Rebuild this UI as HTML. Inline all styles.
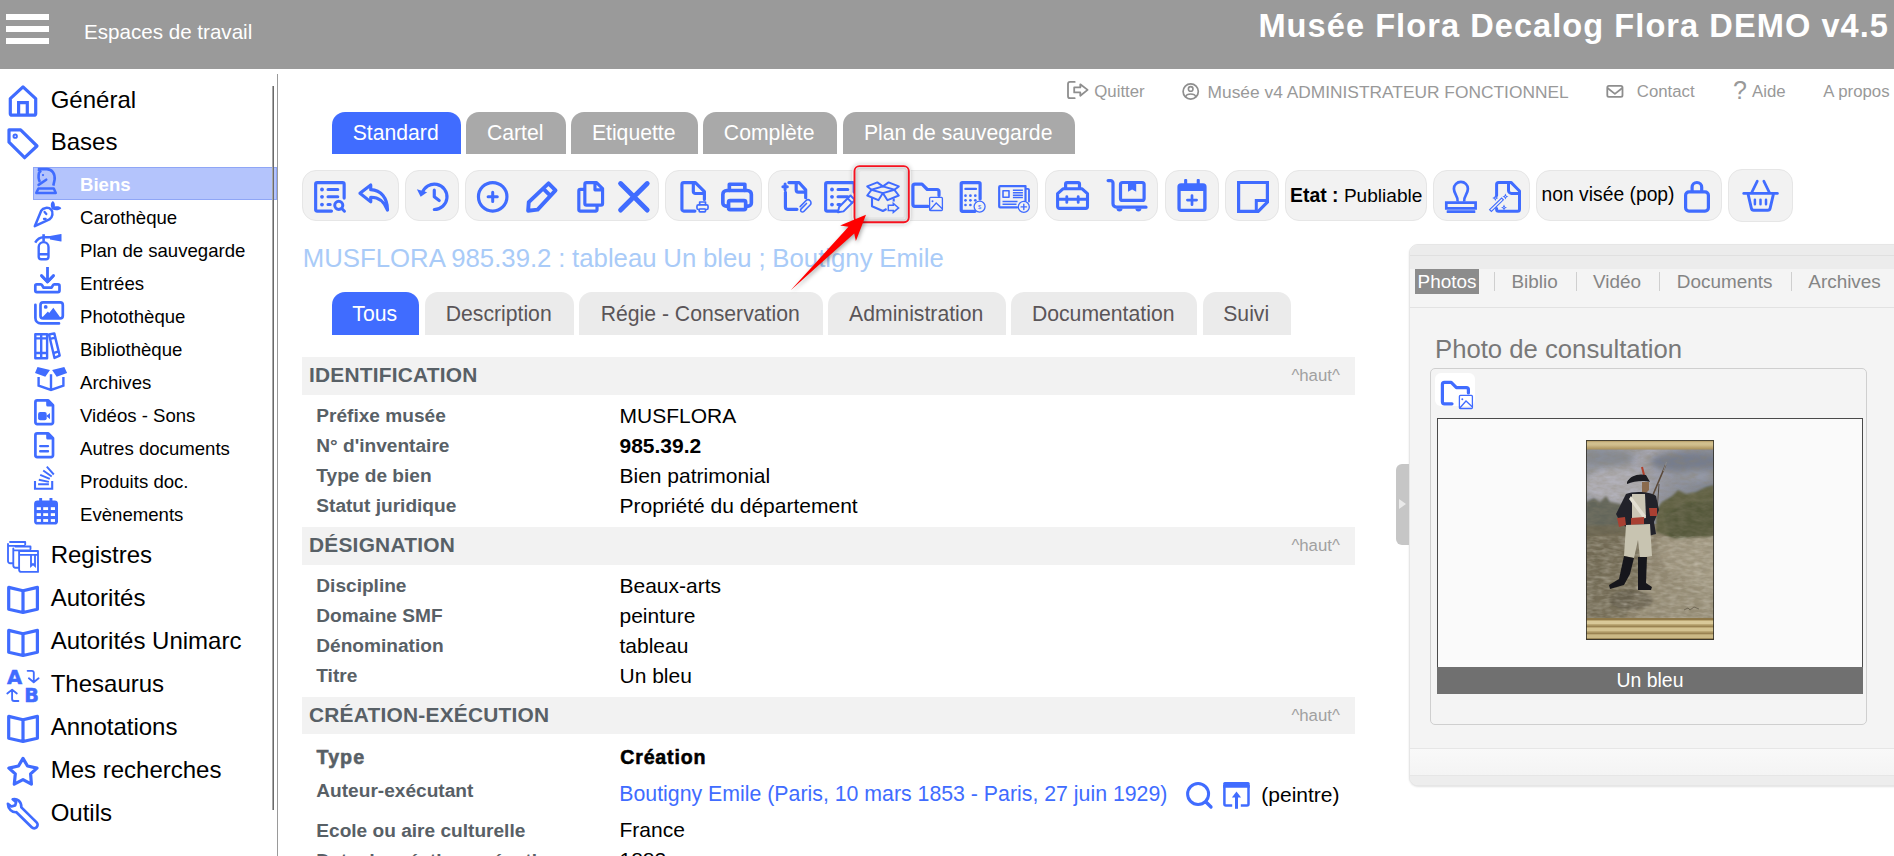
<!DOCTYPE html>
<html lang="fr"><head><meta charset="utf-8"><title>Musée Flora</title><style>
html,body{margin:0;padding:0;background:#fff;}
body{width:1894px;height:856px;overflow:hidden;position:relative;font-family:"Liberation Sans",sans-serif;}
.t{position:absolute;line-height:1;white-space:nowrap;}
.b{position:absolute;}
.i{position:absolute;overflow:visible;}
.tab{position:absolute;box-sizing:border-box;padding-right:1.6px;text-align:center;white-space:nowrap;font-family:"Liberation Sans",sans-serif;}
</style></head><body>
<div class="b" style="left:0px;top:0px;width:1894px;height:68.7px;background:#9a9a9a"></div>
<div class="b" style="left:6px;top:14.3px;width:43px;height:5.7px;background:#fff"></div>
<div class="b" style="left:6px;top:26.2px;width:43px;height:5.7px;background:#fff"></div>
<div class="b" style="left:6px;top:37.9px;width:43px;height:5.7px;background:#fff"></div>
<div class="t" style="left:84px;top:21.56px;font-size:20.6px;color:#fff;font-weight:normal;font-family:'Liberation Sans', sans-serif;">Espaces de travail</div>
<div class="t" style="right:5px;top:10.10px;font-size:32.6px;color:#fff;font-weight:bold;font-family:'Liberation Sans', sans-serif;letter-spacing:1.05px;">Musée Flora Decalog Flora DEMO v4.5</div>
<div class="b" style="left:276.9px;top:74px;width:1.2px;height:782px;background:#9a9a9a"></div>
<div class="t" style="left:50.7px;top:87.58px;font-size:24px;color:#000;font-weight:normal;font-family:'Liberation Sans', sans-serif;">Général</div>
<div class="t" style="left:50.7px;top:130.38px;font-size:24px;color:#000;font-weight:normal;font-family:'Liberation Sans', sans-serif;">Bases</div>
<div class="b" style="left:33px;top:167px;width:244px;height:32.7px;background:#b4c4fc;border:1px solid #8fa6f6;box-sizing:border-box"></div>
<div class="b" style="left:271.6px;top:86px;width:1.1px;height:724px;background:#a9a9a9"></div>
<div class="b" style="left:272.6px;top:86px;width:1.4px;height:724px;background:#6a6a6a"></div>
<div class="t" style="left:80px;top:176.06px;font-size:18.6px;color:#fff;font-weight:bold;font-family:'Liberation Sans', sans-serif;">Biens</div>
<div class="t" style="left:80px;top:209.06px;font-size:18.6px;color:#000;font-weight:normal;font-family:'Liberation Sans', sans-serif;">Carothèque</div>
<div class="t" style="left:80px;top:242.06px;font-size:18.6px;color:#000;font-weight:normal;font-family:'Liberation Sans', sans-serif;">Plan de sauvegarde</div>
<div class="t" style="left:80px;top:275.06px;font-size:18.6px;color:#000;font-weight:normal;font-family:'Liberation Sans', sans-serif;">Entrées</div>
<div class="t" style="left:80px;top:308.06px;font-size:18.6px;color:#000;font-weight:normal;font-family:'Liberation Sans', sans-serif;">Photothèque</div>
<div class="t" style="left:80px;top:341.06px;font-size:18.6px;color:#000;font-weight:normal;font-family:'Liberation Sans', sans-serif;">Bibliothèque</div>
<div class="t" style="left:80px;top:374.06px;font-size:18.6px;color:#000;font-weight:normal;font-family:'Liberation Sans', sans-serif;">Archives</div>
<div class="t" style="left:80px;top:407.06px;font-size:18.6px;color:#000;font-weight:normal;font-family:'Liberation Sans', sans-serif;">Vidéos - Sons</div>
<div class="t" style="left:80px;top:440.06px;font-size:18.6px;color:#000;font-weight:normal;font-family:'Liberation Sans', sans-serif;">Autres documents</div>
<div class="t" style="left:80px;top:473.06px;font-size:18.6px;color:#000;font-weight:normal;font-family:'Liberation Sans', sans-serif;">Produits doc.</div>
<div class="t" style="left:80px;top:506.06px;font-size:18.6px;color:#000;font-weight:normal;font-family:'Liberation Sans', sans-serif;">Evènements</div>
<div class="t" style="left:50.7px;top:543.18px;font-size:24px;color:#000;font-weight:normal;font-family:'Liberation Sans', sans-serif;">Registres</div>
<div class="t" style="left:50.7px;top:586.18px;font-size:24px;color:#000;font-weight:normal;font-family:'Liberation Sans', sans-serif;">Autorités</div>
<div class="t" style="left:50.7px;top:629.18px;font-size:24px;color:#000;font-weight:normal;font-family:'Liberation Sans', sans-serif;">Autorités Unimarc</div>
<div class="t" style="left:50.7px;top:672.18px;font-size:24px;color:#000;font-weight:normal;font-family:'Liberation Sans', sans-serif;">Thesaurus</div>
<div class="t" style="left:50.7px;top:715.18px;font-size:24px;color:#000;font-weight:normal;font-family:'Liberation Sans', sans-serif;">Annotations</div>
<div class="t" style="left:50.7px;top:758.18px;font-size:24px;color:#000;font-weight:normal;font-family:'Liberation Sans', sans-serif;">Mes recherches</div>
<div class="t" style="left:50.7px;top:801.38px;font-size:24px;color:#000;font-weight:normal;font-family:'Liberation Sans', sans-serif;">Outils</div>
<div class="t" style="left:1094.3px;top:84.18px;font-size:16.8px;color:#999;font-weight:normal;font-family:'Liberation Sans', sans-serif;">Quitter</div>
<div class="t" style="left:1207.6px;top:83.71px;font-size:17.35px;color:#999;font-weight:normal;font-family:'Liberation Sans', sans-serif;">Musée v4 ADMINISTRATEUR FONCTIONNEL</div>
<div class="t" style="left:1636.8px;top:84.18px;font-size:16.8px;color:#999;font-weight:normal;font-family:'Liberation Sans', sans-serif;">Contact</div>
<div class="t" style="left:1733px;top:78.44px;font-size:25px;color:#999;font-weight:normal;font-family:'Liberation Sans', sans-serif;">?</div>
<div class="t" style="left:1752px;top:84.18px;font-size:16.8px;color:#999;font-weight:normal;font-family:'Liberation Sans', sans-serif;">Aide</div>
<div class="t" style="left:1823.3px;top:84.18px;font-size:16.8px;color:#999;font-weight:normal;font-family:'Liberation Sans', sans-serif;">A propos</div>
<div class="tab" style="left:332px;top:112px;width:129px;height:41.7px;background:#406cff;color:#fff;font-size:21.2px;line-height:42px;border-radius:13px 13px 0 0">Standard</div>
<div class="tab" style="left:466px;top:112px;width:100px;height:41.7px;background:#a9a9a9;color:#fff;font-size:21.2px;line-height:42px;border-radius:13px 13px 0 0">Cartel</div>
<div class="tab" style="left:571px;top:112px;width:127px;height:41.7px;background:#a9a9a9;color:#fff;font-size:21.2px;line-height:42px;border-radius:13px 13px 0 0">Etiquette</div>
<div class="tab" style="left:703px;top:112px;width:134px;height:41.7px;background:#a9a9a9;color:#fff;font-size:21.2px;line-height:42px;border-radius:13px 13px 0 0">Complète</div>
<div class="tab" style="left:843px;top:112px;width:232px;height:41.7px;background:#a9a9a9;color:#fff;font-size:21.2px;line-height:42px;border-radius:13px 13px 0 0">Plan de sauvegarde</div>
<div class="b" style="left:302px;top:170px;width:97px;height:51px;background:#f2f2f2;border:1px solid #e6e6e6;border-radius:14px;box-sizing:border-box"></div>
<div class="b" style="left:405px;top:170px;width:54px;height:51px;background:#f2f2f2;border:1px solid #e6e6e6;border-radius:14px;box-sizing:border-box"></div>
<div class="b" style="left:465.4px;top:170px;width:193.20000000000005px;height:51px;background:#f2f2f2;border:1px solid #e6e6e6;border-radius:14px;box-sizing:border-box"></div>
<div class="b" style="left:665px;top:170px;width:96.5px;height:51px;background:#f2f2f2;border:1px solid #e6e6e6;border-radius:14px;box-sizing:border-box"></div>
<div class="b" style="left:768.3px;top:170px;width:270.20000000000005px;height:51px;background:#f2f2f2;border:1px solid #e6e6e6;border-radius:14px;box-sizing:border-box"></div>
<div class="b" style="left:1045px;top:170px;width:113.40000000000009px;height:51px;background:#f2f2f2;border:1px solid #e6e6e6;border-radius:14px;box-sizing:border-box"></div>
<div class="b" style="left:1165px;top:170px;width:53.59999999999991px;height:51px;background:#f2f2f2;border:1px solid #e6e6e6;border-radius:14px;box-sizing:border-box"></div>
<div class="b" style="left:1225px;top:170px;width:53.799999999999955px;height:51px;background:#f2f2f2;border:1px solid #e6e6e6;border-radius:14px;box-sizing:border-box"></div>
<div class="b" style="left:1285px;top:170px;width:141.5px;height:51px;background:#f2f2f2;border:1px solid #e6e6e6;border-radius:14px;box-sizing:border-box"></div>
<div class="b" style="left:1433px;top:170px;width:96.79999999999995px;height:51px;background:#f2f2f2;border:1px solid #e6e6e6;border-radius:14px;box-sizing:border-box"></div>
<div class="b" style="left:1536px;top:170px;width:185.5999999999999px;height:51px;background:#f2f2f2;border:1px solid #e6e6e6;border-radius:14px;box-sizing:border-box"></div>
<div class="b" style="left:1728px;top:169px;width:65px;height:53px;background:#f2f2f2;border:1px solid #e6e6e6;border-radius:14px;box-sizing:border-box"></div>
<div class="b" style="left:852px;top:164px;width:59px;height:61px;border-radius:8px;box-shadow:0 0 4px rgba(0,0,0,.18);background:#eee"></div>
<div class="t" style="left:1290.1px;top:186.03px;font-size:19.1px;color:#000;font-weight:normal;font-family:'Liberation Sans', sans-serif;"><b style="font-size:19.4px">Etat :</b> Publiable</div>
<div class="t" style="left:1541.6px;top:185.36px;font-size:19.3px;color:#000;font-weight:normal;font-family:'Liberation Sans', sans-serif;">non visée (pop)</div>
<div class="t" style="left:302.8px;top:246.20px;font-size:25.75px;color:#a9cbf8;font-weight:normal;font-family:'Liberation Sans', sans-serif;word-spacing:-0.4px;">MUSFLORA 985.39.2 : tableau Un bleu ; Boutigny Emile</div>
<div class="tab" style="left:332px;top:292px;width:87px;height:42.8px;background:#406cff;color:#fff;font-size:21.2px;line-height:43px;border-radius:13px 13px 0 0">Tous</div>
<div class="tab" style="left:425px;top:292px;width:149px;height:42.8px;background:#ebebeb;color:#5a5558;font-size:21.2px;line-height:43px;border-radius:13px 13px 0 0">Description</div>
<div class="tab" style="left:579px;top:292px;width:244px;height:42.8px;background:#ebebeb;color:#5a5558;font-size:21.2px;line-height:43px;border-radius:13px 13px 0 0">Régie - Conservation</div>
<div class="tab" style="left:828px;top:292px;width:178px;height:42.8px;background:#ebebeb;color:#5a5558;font-size:21.2px;line-height:43px;border-radius:13px 13px 0 0">Administration</div>
<div class="tab" style="left:1011px;top:292px;width:186px;height:42.8px;background:#ebebeb;color:#5a5558;font-size:21.2px;line-height:43px;border-radius:13px 13px 0 0">Documentation</div>
<div class="tab" style="left:1203px;top:292px;width:88px;height:42.8px;background:#ebebeb;color:#5a5558;font-size:21.2px;line-height:43px;border-radius:13px 13px 0 0">Suivi</div>
<div class="b" style="left:302px;top:357px;width:1053px;height:37.9px;background:#f2f2f2"></div>
<div class="t" style="left:309px;top:365.41px;font-size:20.9px;color:#586066;font-weight:bold;font-family:'Liberation Sans', sans-serif;letter-spacing:0.22px;">IDENTIFICATION</div>
<div class="t" style="left:1291.4px;top:368.08px;font-size:16.8px;color:#a0a0a0;font-weight:normal;font-family:'Liberation Sans', sans-serif;">^haut^</div>
<div class="t" style="left:316.3px;top:406.23px;font-size:19.1px;color:#586066;font-weight:bold;font-family:'Liberation Sans', sans-serif;">Préfixe musée</div>
<div class="t" style="left:619.5px;top:405.22px;font-size:21px;color:#000;font-weight:normal;font-family:'Liberation Sans', sans-serif;">MUSFLORA</div>
<div class="t" style="left:316.3px;top:436.03px;font-size:19.1px;color:#586066;font-weight:bold;font-family:'Liberation Sans', sans-serif;">N° d'inventaire</div>
<div class="t" style="left:619.5px;top:435.02px;font-size:21px;color:#000;font-weight:bold;font-family:'Liberation Sans', sans-serif;">985.39.2</div>
<div class="t" style="left:316.3px;top:465.93px;font-size:19.1px;color:#586066;font-weight:bold;font-family:'Liberation Sans', sans-serif;">Type de bien</div>
<div class="t" style="left:619.5px;top:464.92px;font-size:21px;color:#000;font-weight:normal;font-family:'Liberation Sans', sans-serif;">Bien patrimonial</div>
<div class="t" style="left:316.3px;top:495.93px;font-size:19.1px;color:#586066;font-weight:bold;font-family:'Liberation Sans', sans-serif;">Statut juridique</div>
<div class="t" style="left:619.5px;top:494.92px;font-size:21px;color:#000;font-weight:normal;font-family:'Liberation Sans', sans-serif;">Propriété du département</div>
<div class="b" style="left:302px;top:527px;width:1053px;height:37.9px;background:#f2f2f2"></div>
<div class="t" style="left:309px;top:535.41px;font-size:20.9px;color:#586066;font-weight:bold;font-family:'Liberation Sans', sans-serif;letter-spacing:0.22px;">DÉSIGNATION</div>
<div class="t" style="left:1291.4px;top:538.08px;font-size:16.8px;color:#a0a0a0;font-weight:normal;font-family:'Liberation Sans', sans-serif;">^haut^</div>
<div class="t" style="left:316.3px;top:576.23px;font-size:19.1px;color:#586066;font-weight:bold;font-family:'Liberation Sans', sans-serif;">Discipline</div>
<div class="t" style="left:619.5px;top:575.22px;font-size:21px;color:#000;font-weight:normal;font-family:'Liberation Sans', sans-serif;">Beaux-arts</div>
<div class="t" style="left:316.3px;top:606.23px;font-size:19.1px;color:#586066;font-weight:bold;font-family:'Liberation Sans', sans-serif;">Domaine SMF</div>
<div class="t" style="left:619.5px;top:605.22px;font-size:21px;color:#000;font-weight:normal;font-family:'Liberation Sans', sans-serif;">peinture</div>
<div class="t" style="left:316.3px;top:636.23px;font-size:19.1px;color:#586066;font-weight:bold;font-family:'Liberation Sans', sans-serif;">Dénomination</div>
<div class="t" style="left:619.5px;top:635.22px;font-size:21px;color:#000;font-weight:normal;font-family:'Liberation Sans', sans-serif;">tableau</div>
<div class="t" style="left:316.3px;top:666.23px;font-size:19.1px;color:#586066;font-weight:bold;font-family:'Liberation Sans', sans-serif;">Titre</div>
<div class="t" style="left:619.5px;top:665.22px;font-size:21px;color:#000;font-weight:normal;font-family:'Liberation Sans', sans-serif;">Un bleu</div>
<div class="b" style="left:302px;top:697px;width:1053px;height:36.7px;background:#f2f2f2"></div>
<div class="t" style="left:309px;top:705.41px;font-size:20.9px;color:#586066;font-weight:bold;font-family:'Liberation Sans', sans-serif;letter-spacing:0.22px;">CRÉATION-EXÉCUTION</div>
<div class="t" style="left:1291.4px;top:708.08px;font-size:16.8px;color:#a0a0a0;font-weight:normal;font-family:'Liberation Sans', sans-serif;">^haut^</div>
<div class="t" style="left:316.6px;top:748.12px;font-size:19.7px;color:#586066;font-weight:bold;font-family:'Liberation Sans', sans-serif;letter-spacing:1.0px;-webkit-text-stroke:0.55px #586066;">Type</div>
<div class="t" style="left:620.3px;top:748.21px;font-size:19.6px;color:#000;font-weight:bold;font-family:'Liberation Sans', sans-serif;letter-spacing:0.8px;-webkit-text-stroke:0.55px #000;">Création</div>
<div class="t" style="left:316.3px;top:780.93px;font-size:19.1px;color:#586066;font-weight:bold;font-family:'Liberation Sans', sans-serif;">Auteur-exécutant</div>
<div class="t" style="left:619.3px;top:783.97px;font-size:21.3px;color:#406cff;font-weight:normal;font-family:'Liberation Sans', sans-serif;">Boutigny Emile (Paris, 10 mars 1853 - Paris, 27 juin 1929)</div>
<div class="t" style="left:1261.3px;top:783.62px;font-size:21px;color:#000;font-weight:normal;font-family:'Liberation Sans', sans-serif;">(peintre)</div>
<div class="t" style="left:316.3px;top:821.13px;font-size:19.1px;color:#586066;font-weight:bold;font-family:'Liberation Sans', sans-serif;">Ecole ou aire culturelle</div>
<div class="t" style="left:619.5px;top:819.12px;font-size:21px;color:#000;font-weight:normal;font-family:'Liberation Sans', sans-serif;">France</div>
<div class="t" style="left:316.3px;top:851.13px;font-size:19.1px;color:#586066;font-weight:bold;font-family:'Liberation Sans', sans-serif;">Date de création-exécution</div>
<div class="t" style="left:619.5px;top:849.22px;font-size:21px;color:#000;font-weight:normal;font-family:'Liberation Sans', sans-serif;">1882</div>
<div class="b" style="left:1408.8px;top:244px;width:500px;height:542px;background:#f4f4f4;border:1px solid #e6e6e6;border-radius:9px 0 0 9px;box-sizing:border-box;box-shadow:0 1px 2px rgba(0,0,0,.12)"></div>
<div class="b" style="left:1410px;top:245px;width:490px;height:23.5px;background:#ececec;border-radius:8px 0 0 0"></div>
<div class="b" style="left:1410px;top:255px;width:490px;height:1px;background:#e0e0e0"></div>
<div class="b" style="left:1410px;top:307px;width:490px;height:1px;background:#e2e2e2"></div>
<div class="b" style="left:1410px;top:748px;width:490px;height:1px;background:#e6e6e6"></div>
<div class="b" style="left:1410px;top:775px;width:490px;height:1px;background:#e6e6e6"></div>
<div class="b" style="left:1410px;top:776px;width:490px;height:9px;background:#ededed;border-radius:0 0 0 8px"></div>
<div class="b" style="left:1410px;top:749px;width:490px;height:26px;background:linear-gradient(#f9f9f9,#f4f4f4)"></div>
<div class="b" style="left:1396.4px;top:464px;width:12.5px;height:81px;background:#c6c6c6;border-radius:6px 0 0 6px"></div>
<svg class="i" style="left:1397.6px;top:498px" width="10" height="12" viewBox="0 0 10 12"><path d="M1 1 L8 6 L1 11Z" fill="#e9e9e9"/></svg>
<div class="b" style="left:1415px;top:269.3px;width:64px;height:24.4px;background:#8c8c8c"></div>
<div class="t" style="left:1417.6px;top:272.90px;font-size:18.9px;color:#fff;font-weight:normal;font-family:'Liberation Sans', sans-serif;">Photos</div>
<div class="t" style="left:1511.5px;top:272.90px;font-size:18.9px;color:#858585;font-weight:normal;font-family:'Liberation Sans', sans-serif;">Biblio</div>
<div class="t" style="left:1593.1px;top:272.90px;font-size:18.9px;color:#858585;font-weight:normal;font-family:'Liberation Sans', sans-serif;">Vidéo</div>
<div class="t" style="left:1676.8px;top:272.90px;font-size:18.9px;color:#858585;font-weight:normal;font-family:'Liberation Sans', sans-serif;">Documents</div>
<div class="t" style="left:1808.3px;top:272.90px;font-size:18.9px;color:#858585;font-weight:normal;font-family:'Liberation Sans', sans-serif;">Archives</div>
<div class="b" style="left:1494px;top:272px;width:1px;height:19px;background:#cfcfcf"></div>
<div class="b" style="left:1575.7px;top:272px;width:1px;height:19px;background:#cfcfcf"></div>
<div class="b" style="left:1659px;top:272px;width:1px;height:19px;background:#cfcfcf"></div>
<div class="b" style="left:1790.8px;top:272px;width:1px;height:19px;background:#cfcfcf"></div>
<div class="t" style="left:1435px;top:337.04px;font-size:25.7px;color:#787878;font-weight:normal;font-family:'Liberation Sans', sans-serif;">Photo de consultation</div>
<div class="b" style="left:1430px;top:368px;width:437px;height:357px;border:1px solid #cfcfcf;border-radius:5px;box-sizing:border-box;background:#f4f4f4"></div>
<div class="b" style="left:1435px;top:373px;width:40px;height:33px;background:#fff;border-radius:6px"></div>
<div class="b" style="left:1437px;top:418px;width:426px;height:276px;border:1px solid #4a4a4a;box-sizing:border-box;background:#fafafa"></div>
<div class="b" style="left:1437px;top:667px;width:426px;height:27px;background:#707070"></div>
<div class="t" style="left:1437px;width:426px;text-align:center;top:670.78px;font-size:19.4px;color:#fff">Un bleu</div>
<svg class="i" style="left:1586px;top:440px" width="128" height="200" viewBox="0 0 128 200">
<defs>
<filter id="pb" x="-5%" y="-5%" width="110%" height="110%"><feGaussianBlur stdDeviation="1.3"/></filter>
<filter id="pb2" x="-5%" y="-5%" width="110%" height="110%"><feGaussianBlur stdDeviation="0.75"/></filter>
<filter id="pb3" x="-10%" y="-10%" width="120%" height="120%"><feGaussianBlur stdDeviation="3"/></filter>
<linearGradient id="sky" x1="0" y1="0" x2="1" y2="0.4"><stop offset="0" stop-color="#8e939d"/><stop offset="0.45" stop-color="#a7a7b2"/><stop offset="1" stop-color="#7f8696"/></linearGradient>
<linearGradient id="gnd" x1="0" y1="0" x2="1" y2="0.3"><stop offset="0" stop-color="#6f6750"/><stop offset="0.5" stop-color="#8a806a"/><stop offset="1" stop-color="#9f967f"/></linearGradient>
<linearGradient id="gold" x1="0" y1="0" x2="0" y2="1"><stop offset="0" stop-color="#b39a63"/><stop offset="0.5" stop-color="#d2c08f"/><stop offset="1" stop-color="#a88f5a"/></linearGradient>
<filter id="tx" x="0" y="0" width="100%" height="100%"><feTurbulence type="fractalNoise" baseFrequency="0.09 0.22" numOctaves="3" seed="7" result="n"/><feColorMatrix in="n" type="matrix" values="0 0 0 0 0.25  0 0 0 0 0.22  0 0 0 0 0.15  0.9 0.9 0 0 -0.62"/></filter>
<filter id="tx2" x="0" y="0" width="100%" height="100%"><feTurbulence type="fractalNoise" baseFrequency="0.12 0.3" numOctaves="2" seed="3" result="n"/><feColorMatrix in="n" type="matrix" values="0 0 0 0 0.85  0 0 0 0 0.82  0 0 0 0 0.74  0 0.9 0.9 0 -0.72"/></filter>
<clipPath id="pc"><rect x="0" y="0" width="128" height="200"/></clipPath>
</defs>
<g clip-path="url(#pc)">
<rect width="128" height="200" fill="#857c66"/>
<rect x="0" y="8" width="128" height="80" fill="url(#sky)"/>
<g filter="url(#pb3)">
<ellipse cx="30" cy="45" rx="34" ry="16" fill="#b3b2bb"/>
<ellipse cx="100" cy="22" rx="36" ry="10" fill="#767d8e"/>
<ellipse cx="112" cy="36" rx="22" ry="6" fill="#9499a6"/>
<ellipse cx="20" cy="18" rx="28" ry="8" fill="#878c97"/>
</g>
<rect x="0" y="84" width="128" height="96" fill="url(#gnd)"/>
<g filter="url(#pb)">
<path d="M0 62 L8 58 L14 62 L20 56 L24 62 L34 64 L46 70 L46 92 L0 96 Z" fill="#62655a"/>
<path d="M70 70 L76 62 L86 56 L92 50 L100 54 L110 52 L120 47 L128 45 L128 96 L92 100 L70 92 Z" fill="#5e6042"/>
<path d="M78 76 L96 64 L128 60 L128 98 L84 98 Z" fill="#55583a"/>
<path d="M0 86 L50 84 L60 120 L40 178 L0 178 Z" fill="#6e664f" opacity=".75"/>
<path d="M70 100 L128 96 L128 150 L80 130 Z" fill="#a59c86" opacity=".7"/>
<path d="M60 140 L128 150 L128 178 L50 178 Z" fill="#978d76" opacity=".7"/>
<ellipse cx="45" cy="160" rx="22" ry="10" fill="#5f5a49" opacity=".7"/>
</g>
<rect x="0" y="9" width="128" height="170" filter="url(#tx)" opacity=".55"/>
<rect x="0" y="96" width="128" height="83" filter="url(#tx2)" opacity=".45"/>
<g filter="url(#pb2)">
<path d="M79.6 25 L58 76" stroke="#5b4a3a" stroke-width="1.6" fill="none"/>
<path d="M80.5 22 L77.5 31" stroke="#8b8b8b" stroke-width="1" fill="none"/>
<path d="M73 44 L71 72" stroke="#4a4036" stroke-width="0.9" fill="none"/>
<path d="M56 27 L58 35" stroke="#b0402c" stroke-width="2" fill="none"/>
<path d="M41 42 C44 36 52 33 60 35 L64 42 C58 40 48 41 41 44 Z" fill="#1b1b20"/>
<path d="M56 42 H63 V50 L60 53 H56 Z" fill="#8a6a4e"/>
<path d="M40 54 C46 51 64 51 70 56 L73 70 L68 82 L70 94 L62 96 L44 90 L34 82 L30 74 Z" fill="#20222b"/>
<path d="M46 54 L59 54 L60 78 L46 80 Z" fill="#cbc6b5"/>
<path d="M45 56 L60 76 L57 78 L43 59 Z" fill="#e3dfd2"/>
<path d="M31 78 L39 77 L40 85 L33 87 Z M45 78 L58 77 L58 84 L45 85 Z M63 68 L71 68 L71 76 L64 76 Z" fill="#a94030"/>
<path d="M40 85 L64 84 L66 116 L54 118 L52 100 L48 118 L38 116 Z" fill="#c8c4b1"/>
<path d="M38 116 L48 118 L44 134 L38 145 L24 149 L23 145 L33 139 Z" fill="#17171a"/>
<path d="M52 117 L61 117 L60 143 L66 147 L65 150 L52 150 Z" fill="#17171a"/>
</g>
<path d="M98 170 l4 -2 l2 2 l4 -3 l5 2" stroke="#5f5747" stroke-width="0.7" fill="none"/>
<rect x="0" y="0" width="128" height="9.5" fill="url(#gold)"/>
<rect x="0" y="2.5" width="128" height="1" fill="#e0d2a6" opacity=".7"/>
<rect x="0" y="178" width="128" height="22" fill="#bca875"/>
<g>
<rect x="0" y="178" width="128" height="2" fill="#8d7748"/>
<rect x="0" y="181" width="128" height="3" fill="#d9c999"/>
<rect x="0" y="185.5" width="128" height="1.5" fill="#9a8352"/>
<rect x="0" y="188" width="128" height="3" fill="#d4c391"/>
<rect x="0" y="192.5" width="128" height="1.5" fill="#9a8352"/>
<rect x="0" y="195" width="128" height="3" fill="#cbb986"/>
<rect x="0" y="198.5" width="128" height="1.5" fill="#7f6b40"/>
</g>
<rect x="0.5" y="0.5" width="127" height="199" fill="none" stroke="#2c2a26" stroke-width="1" opacity=".8"/>
</g>
</svg>

<svg class="i" style="left:0;top:0" width="1894" height="856" viewBox="0 0 1894 856"><path d="M23 86.9 L10.3 98.6 V113.7 a1.5 1.5 0 0 0 1.5 1.5 H34.2 a1.5 1.5 0 0 0 1.5 -1.5 V98.6 Z" fill="none" stroke="#406cff" stroke-width="3.2" stroke-linejoin="round" stroke-linecap="round" />
<path d="M18.6 115 V102.7 H27.3 V115" fill="none" stroke="#406cff" stroke-width="3.2" stroke-linejoin="miter" stroke-linecap="butt" />
<path d="M9 129.8 H20.6 L37 146 L24.6 157.7 L9 142.2 Z" fill="none" stroke="#406cff" stroke-width="3.2" stroke-linejoin="round" stroke-linecap="round" />
<circle cx="15.2" cy="136.2" r="1.7" fill="none" stroke="#406cff" stroke-width="1.9"/>
<path d="M10 542 H25.2 V544.6 M9.2 545.8 H24.2 M8 544 V561 a2.2 2.2 0 0 0 2.2 2.2 H13" fill="none" stroke="#406cff" stroke-width="1.85" stroke-linejoin="round" stroke-linecap="round" />
<path d="M15.3 546.5 H30.5 V549.1 M14.5 550.3 H29.5 M13.3 548.5 V565.5 a2.2 2.2 0 0 0 2.2 2.2 H18.3" fill="none" stroke="#406cff" stroke-width="1.85" stroke-linejoin="round" stroke-linecap="round" />
<path d="M19.1 551 H38 V571.9 H21.3 a2.2 2.2 0 0 1 -2.2 -2.2 Z M19.1 554.8 H38" fill="none" stroke="#406cff" stroke-width="1.85" stroke-linejoin="round" stroke-linecap="round" />
<path d="M31 555 V565.8 L33 564 L35 565.8 V555" fill="none" stroke="#406cff" stroke-width="1.85" stroke-linejoin="miter" stroke-linecap="round" />
<path d="M8.7 587.4 L23 590.8 L37.4 587.4 V609.3 L23 612.5 L8.7 609.3 Z M23 590.8 V612.5" fill="none" stroke="#406cff" stroke-width="3.2" stroke-linejoin="round" stroke-linecap="round" />
<path d="M8.7 630.4 L23 633.8 L37.4 630.4 V652.3 L23 655.5 L8.7 652.3 Z M23 633.8 V655.5" fill="none" stroke="#406cff" stroke-width="3.2" stroke-linejoin="round" stroke-linecap="round" />
<path d="M8.7 716.4 L23 719.8 L37.4 716.4 V738.3 L23 741.5 L8.7 738.3 Z M23 719.8 V741.5" fill="none" stroke="#406cff" stroke-width="3.2" stroke-linejoin="round" stroke-linecap="round" />
<text x="6.9" y="684.2" font-family="DejaVu Sans, sans-serif" font-weight="bold" font-size="19.6" fill="#406cff" stroke="#406cff" stroke-width="0.5">A</text>
<text x="24.2" y="701.9" font-family="DejaVu Sans, sans-serif" font-weight="bold" font-size="19.2" fill="#406cff" stroke="#406cff" stroke-width="0.5">B</text>
<path d="M27.6 670.8 H31.8 a2 2 0 0 1 2 2 V682 M28.9 678.3 L33.7 682.3 L38.6 678.3" fill="none" stroke="#406cff" stroke-width="1.85" stroke-linejoin="round" stroke-linecap="round" />
<path d="M18.4 701 H14.1 a2 2 0 0 1 -2 -2 V690 M7.3 693.5 L12.1 689.6 L16.8 693.5" fill="none" stroke="#406cff" stroke-width="1.85" stroke-linejoin="round" stroke-linecap="round" />
<path d="M23 758.4 L27.5 766 L37 768.1 L30.6 773.9 L31.4 784.2 L23 779.7 L14.3 784.2 L15.3 773.9 L8.9 768.1 L18.5 766 Z" fill="none" stroke="#406cff" stroke-width="3.2" stroke-linejoin="round" stroke-linecap="round" />
<path d="M12.7 799.3 C17 798.2 21.3 801 21.4 807.4 L36.6 822.4 a3.3 3.3 0 0 1 -4.9 4.9 L16.4 812.2 C12 812.6 8 809 7.9 803.8 L11.4 806.5 L15.2 805.4 L16.1 802.1 Z" fill="none" stroke="#406cff" stroke-width="2.7" stroke-linejoin="round" stroke-linecap="round" />
<path d="M37.8 169.1 H46.8 C52.2 169.1 55.3 173.8 54.6 179.8 L53.3 185.6" fill="none" stroke="#406cff" stroke-width="2.6" stroke-linejoin="round" stroke-linecap="butt" />
<path d="M38.4 169.4 L40.4 171.4 L39 172.8 C38.2 176.3 38.3 179.3 40 182" fill="none" stroke="#406cff" stroke-width="2.6" stroke-linejoin="round" stroke-linecap="butt" />
<path d="M46.2 179.7 L38.6 184.9" fill="none" stroke="#406cff" stroke-width="2.6" stroke-linejoin="round" stroke-linecap="round" />
<circle cx="43" cy="175.1" r="1.15" fill="#406cff"/>
<path d="M38.4 188.5 H53.8 L55.8 192.9 H36.3 Z" fill="none" stroke="#406cff" stroke-width="2.5" stroke-linejoin="round" stroke-linecap="round" />
<path d="M34.8 226.2 L41.3 210.6 C43 207.6 48.4 206.8 51.2 209.6 C53.6 212.2 52.6 217.2 49.4 219.4 Z" fill="none" stroke="#406cff" stroke-width="2.5" stroke-linejoin="round" stroke-linecap="round" />
<path d="M44.6 212 L46.3 214 M44 218.8 L45.6 218.9" fill="none" stroke="#406cff" stroke-width="2.3" stroke-linejoin="round" stroke-linecap="round" />
<path d="M52.3 209.4 C50.2 206.5 50.3 202.5 52.9 201 C55 202.6 55.1 205 54.8 206.6 C57 205.8 60 206.2 61.3 208.2 C59.5 210.4 55.5 210.8 52.3 209.4 Z" fill="#406cff" />
<path d="M38.7 247 a4.9 4.9 0 0 1 9.8 0 V256.7 a2.5 2.5 0 0 1 -2.5 2.5 H41.2 a2.5 2.5 0 0 1 -2.5 -2.5 Z M38.7 254.3 H48.5" fill="none" stroke="#406cff" stroke-width="2.4" stroke-linejoin="round" stroke-linecap="round" />
<path d="M43.6 234.2 V241.5" fill="none" stroke="#406cff" stroke-width="2.6" stroke-linejoin="round" stroke-linecap="butt" />
<path d="M35.2 242.6 C37 239.5 40 237.3 43.6 237.2 H50.5" fill="none" stroke="#406cff" stroke-width="2.5" stroke-linejoin="round" stroke-linecap="butt" />
<path d="M50 235.9 L61 233.9 a.5 .5 0 0 1 .5 .5 V241 a.5 .5 0 0 1 -.5 .5 L50 239.6 Z" fill="#406cff" />
<path d="M47.5 267 V281.5 M41.2 275.6 L47.5 282 L53.8 275.6" fill="none" stroke="#406cff" stroke-width="2.8" stroke-linejoin="round" stroke-linecap="butt" />
<path d="M41.4 275.4 L47.5 281.7 L53.6 275.4" fill="none" stroke="#406cff" stroke-width="2.8" stroke-linejoin="round" stroke-linecap="round" />
<path d="M36.8 284.4 H40.8 a1.5 1.5 0 0 1 1.3 .8 L43.6 287.7 H51.6 L53 285.2 a1.5 1.5 0 0 1 1.3 -.8 H58 a1.5 1.5 0 0 1 1.5 1.5 V290.6 a1.5 1.5 0 0 1 -1.5 1.5 H36.8 a1.5 1.5 0 0 1 -1.5 -1.5 V285.9 a1.5 1.5 0 0 1 1.5 -1.5 Z" fill="none" stroke="#406cff" stroke-width="2.7" stroke-linejoin="round" stroke-linecap="round" />
<rect x="40.5" y="302.4" width="22.3" height="16" rx="2.6" fill="none" stroke="#406cff" stroke-width="2.7" stroke-linejoin="round"/>
<path d="M35.4 304.8 V318 a5.4 5.4 0 0 0 5.4 5.4 H59" fill="none" stroke="#406cff" stroke-width="2.7" stroke-linejoin="round" stroke-linecap="round" />
<path d="M42.2 317.5 L47.9 311.6 L49.2 313 L53.3 307.8 L60.3 317.5 Z" fill="#406cff" />
<circle cx="45.7" cy="306.9" r="1.9" fill="#406cff"/>
<path d="M35.3 334.2 H47.1 V358.2 H35.3 Z M41.2 334.2 V358.2 M35.3 338.4 H47.1 M35.3 353 H47.1" fill="none" stroke="#406cff" stroke-width="2.4" stroke-linejoin="round" stroke-linecap="round" />
<path d="M49 334.5 L54.3 333.4 L59.7 355.6 L54.5 357.9 Z M50 338.8 L55.4 337.6 M53.4 353.2 L58.6 351.4" fill="none" stroke="#406cff" stroke-width="2.4" stroke-linejoin="round" stroke-linecap="round" />
<path d="M37.5 367 L50 370 L45.3 376.8 L35 372.9 Z M64.3 367 L52.1 370 L56.7 376.8 L67.1 372.9 Z" fill="#406cff" />
<path d="M38.6 376.9 V385.6 L51 390 L63.4 385.6 V376.9 M51 374.2 V390" fill="none" stroke="#406cff" stroke-width="2.4" stroke-linejoin="miter" stroke-linecap="butt" />
<path d="M37.2 400.4 H48.3 L53 405.3 V422.3 a1.8 1.8 0 0 1 -1.8 1.8 H37.2 a1.8 1.8 0 0 1 -1.8 -1.8 V402.2 a1.8 1.8 0 0 1 1.8 -1.8 Z" fill="none" stroke="#406cff" stroke-width="2.7" stroke-linejoin="round" stroke-linecap="round" /><path d="M46.2 400.2 H48.5 L53.4 405.4 V406.6 H47.7 a1.5 1.5 0 0 1 -1.5 -1.5 Z" fill="#406cff" />
<rect x="38.1" y="412" width="8.6" height="8.3" rx="2" fill="#406cff"/><path d="M46.2 416 L50 413 V419.2 Z" fill="#406cff" />
<path d="M37.2 433.4 H48.3 L53 438.3 V455.3 a1.8 1.8 0 0 1 -1.8 1.8 H37.2 a1.8 1.8 0 0 1 -1.8 -1.8 V435.2 a1.8 1.8 0 0 1 1.8 -1.8 Z" fill="none" stroke="#406cff" stroke-width="2.7" stroke-linejoin="round" stroke-linecap="round" /><path d="M46.2 433.2 H48.5 L53.4 438.4 V439.6 H47.7 a1.5 1.5 0 0 1 -1.5 -1.5 Z" fill="#406cff" />
<path d="M40.2 446.1 H48 M40.2 451.2 H48" fill="none" stroke="#406cff" stroke-width="2.4" stroke-linejoin="round" stroke-linecap="round" />
<path d="M35 481 V488.8 H52.2 V481" fill="none" stroke="#406cff" stroke-width="2.1" stroke-linejoin="miter" stroke-linecap="butt" />
<path d="M38.1 484.2 H48.9 M38.8 479.7 L48.9 481.9 M40.2 474.9 L49.8 478.9 M43.2 470.4 L51.7 476.6 M46.8 466.6 L53.8 474.5" fill="none" stroke="#406cff" stroke-width="1.9" stroke-linejoin="round" stroke-linecap="butt" />
<rect x="34.1" y="500.5" width="23.9" height="24.1" rx="3.4" fill="#406cff"/><rect x="39.2" y="498" width="2.9" height="4" rx="0" fill="#406cff"/><rect x="49.5" y="498" width="2.9" height="4" rx="0" fill="#406cff"/>
<rect x="36.7" y="507.2" width="4.2" height="2.8" rx="0" fill="#fff"/>
<rect x="36.7" y="513.2" width="4.2" height="2.8" rx="0" fill="#fff"/>
<rect x="36.7" y="519.1" width="4.2" height="2.8" rx="0" fill="#fff"/>
<rect x="43.2" y="507.2" width="4.9" height="2.8" rx="0" fill="#fff"/>
<rect x="43.2" y="513.2" width="4.9" height="2.8" rx="0" fill="#fff"/>
<rect x="43.2" y="519.1" width="4.9" height="2.8" rx="0" fill="#fff"/>
<rect x="50.8" y="507.2" width="4.2" height="2.8" rx="0" fill="#fff"/>
<rect x="50.8" y="513.2" width="4.2" height="2.8" rx="0" fill="#fff"/>
<rect x="50.8" y="519.1" width="4.2" height="2.8" rx="0" fill="#fff"/>
<path d="M1074.7 81.9 H1070 a2 2 0 0 0 -2 2 V96.2 a2 2 0 0 0 2 2 H1074.7" fill="none" stroke="#8e8e8e" stroke-width="1.8" stroke-linejoin="round" stroke-linecap="round" />
<path d="M1074.2 87.4 H1080.3 V84.3 L1087.6 89.9 L1080.3 95.8 V92.4 H1074.2 Z" fill="none" stroke="#8e8e8e" stroke-width="1.8" stroke-linejoin="round" stroke-linecap="round" />
<circle cx="1190.7" cy="91.5" r="7.6" fill="none" stroke="#8e8e8e" stroke-width="1.7"/><circle cx="1190.7" cy="88.9" r="2.3" fill="none" stroke="#8e8e8e" stroke-width="1.6"/><path d="M1185.8 96.6 C1186.8 93.2 1194.6 93.2 1195.6 96.6" fill="none" stroke="#8e8e8e" stroke-width="1.6" stroke-linejoin="round" stroke-linecap="round" />
<rect x="1607.3" y="85.9" width="15.2" height="10.9" rx="1.6" fill="none" stroke="#8e8e8e" stroke-width="1.8" stroke-linejoin="round"/><path d="M1607.8 88.3 L1614.9 93.9 L1622 88.3" fill="none" stroke="#8e8e8e" stroke-width="1.8" stroke-linejoin="round" stroke-linecap="round" />
<g transform="translate(310.9 177.8) scale(1.5833)"><path d="M13 21 H4 a1 1 0 0 1 -1 -1 V4 a1 1 0 0 1 1 -1 H20 a1 1 0 0 1 1 1 V12.8" fill="none" stroke="#406cff" stroke-width="2" stroke-linejoin="round" stroke-linecap="round" /><path d="M10.8 7.4 H17 M10.8 12 H17 M10.8 16.9 H12.2" fill="none" stroke="#406cff" stroke-width="1.9" stroke-linejoin="round" stroke-linecap="round" /><circle cx="7" cy="7.4" r="1.2" fill="#406cff"/><circle cx="7" cy="12" r="1.2" fill="#406cff"/><circle cx="7" cy="16.9" r="1.2" fill="#406cff"/><circle cx="17.6" cy="17.4" r="2.55" fill="none" stroke="#406cff" stroke-width="1.9"/><path d="M19.5 19.4 L21.2 21.1" fill="none" stroke="#406cff" stroke-width="1.9" stroke-linejoin="round" stroke-linecap="round" /></g>
<g transform="translate(354.9 177.8) scale(1.5833)"><path d="M10 4.5 L3.2 9.8 L10 15.2 V12.3 C14.5 12.2 18.3 14.5 20.6 20.4 C20.6 13 16.5 7.7 10 7.5 Z" fill="none" stroke="#406cff" stroke-width="2" stroke-linejoin="round" stroke-linecap="round" /></g>
<g transform="translate(413.7 177.8) scale(1.5833)"><path d="M5.4 9.6 A8 8 0 1 1 13 20" fill="none" stroke="#406cff" stroke-width="2" stroke-linejoin="round" stroke-linecap="round" /><path d="M13 7.8 V12 L16.1 14.4" fill="none" stroke="#406cff" stroke-width="2" stroke-linejoin="round" stroke-linecap="round" /><path d="M2 7.3 L8.5 9.2 L4.4 12 Z" fill="#406cff" /></g>
<g transform="translate(473.7 177.8) scale(1.5833)"><circle cx="12" cy="12" r="9" fill="none" stroke="#406cff" stroke-width="2"/><path d="M12 9.1 V14.9 M9.1 12 H14.9" fill="none" stroke="#406cff" stroke-width="1.9" stroke-linejoin="round" stroke-linecap="round" /></g>
<g transform="translate(522.9 177.8) scale(1.5833)"><path d="M16.2 3.5 L20.6 7.9 L9.3 20.1 L3.3 20.8 L3.7 15.4 Z M13 7 L17.3 11.3" fill="none" stroke="#406cff" stroke-width="2.45" stroke-linejoin="round" stroke-linecap="round" /></g>
<g transform="translate(571.7 177.8) scale(1.5833)"><path d="M9.3 3 H15.7 L19.5 6.8 V16.3 a1 1 0 0 1 -1 1 H9.3 a1 1 0 0 1 -1 -1 V4 a1 1 0 0 1 1 -1 Z M14.7 3.4 V7.6 H19.2" fill="none" stroke="#406cff" stroke-width="2" stroke-linejoin="round" stroke-linecap="round" /><path d="M8 7.3 H5.5 a1 1 0 0 0 -1 1 V20 a1 1 0 0 0 1 1 H15 a1 1 0 0 0 1 -1 V17.6" fill="none" stroke="#406cff" stroke-width="2" stroke-linejoin="round" stroke-linecap="round" /></g>
<g transform="translate(614.9 177.8) scale(1.5833)"><path d="M3.6 3.6 L20.4 20.4 M20.4 3.6 L3.6 20.4" fill="none" stroke="#406cff" stroke-width="3.1" stroke-linejoin="round" stroke-linecap="round" /></g>
<g transform="translate(674 177.8) scale(1.5833)"><path d="M13.2 21 H6.2 a1.2 1.2 0 0 1 -1.2 -1.2 V4.2 a1.2 1.2 0 0 1 1.2 -1.2 H13.5 L19.2 8.8 V13.7 M12.2 3.4 V8.6 a1.3 1.3 0 0 0 1.3 1.3 H18.9" fill="none" stroke="#406cff" stroke-width="2" stroke-linejoin="round" stroke-linecap="round" /><rect x="14.5" y="17.1" width="7" height="2.9" rx="0.9" fill="#f2f2f2" stroke="#406cff" stroke-width="1.05" stroke-linejoin="round"/><path d="M16.2 16.9 V15.3 H19.9 V16.9" fill="none" stroke="#406cff" stroke-width="1.05" stroke-linejoin="round" stroke-linecap="round" /><rect x="15.9" y="19.7" width="4" height="1.8" rx="0.5" fill="#f2f2f2" stroke="#406cff" stroke-width="1.05" stroke-linejoin="round"/></g>
<g transform="translate(718.1 177.8) scale(1.5833)"><path d="M7.1 8 V4.1 H16.9 V8" fill="none" stroke="#406cff" stroke-width="2.3" stroke-linejoin="round" stroke-linecap="round" /><path d="M6.5 17.9 H5 a2 2 0 0 1 -2 -2 V10.5 a2.5 2.5 0 0 1 2.5 -2.5 H18.5 a2.5 2.5 0 0 1 2.5 2.5 V15.9 a2 2 0 0 1 -2 2 H17.5" fill="none" stroke="#406cff" stroke-width="2.3" stroke-linejoin="round" stroke-linecap="round" /><rect x="6.6" y="14.4" width="10.8" height="5.7" rx="1" fill="none" stroke="#406cff" stroke-width="2.3" stroke-linejoin="round"/></g>
<g transform="translate(777.5 177.8) scale(1.5833)"><path d="M12.3 19.9 H6.4 a1.4 1.4 0 0 1 -1.4 -1.4 V9.2 M7.2 3 H13.6 L17.8 7.6 V12.6 M11.8 3.4 V7.7 a1.3 1.3 0 0 0 1.3 1.3 H17.4" fill="none" stroke="#406cff" stroke-width="2" stroke-linejoin="round" stroke-linecap="round" /><path d="M3.4 5.7 H6.2 M4.8 3.9 V7.6" fill="none" stroke="#406cff" stroke-width="1.9" stroke-linejoin="round" stroke-linecap="round" /><path d="M14.3 18.2 L17.9 14.5 a1.9 1.9 0 0 1 2.7 2.7 L16.6 21.3 a1.15 1.15 0 0 1 -1.65 -1.65 L18.3 16.2" fill="none" stroke="#406cff" stroke-width="1.0" stroke-linejoin="round" stroke-linecap="round" /></g>
<g transform="translate(820.9 177.8) scale(1.5833)"><path d="M10.5 21 H4 a1 1 0 0 1 -1 -1 V4 a1 1 0 0 1 1 -1 H20 a1 1 0 0 1 1 1 V9" fill="none" stroke="#406cff" stroke-width="2" stroke-linejoin="round" stroke-linecap="round" /><path d="M10.8 7.4 H17 M10.8 12 H17 M10.8 16.9 H12" fill="none" stroke="#406cff" stroke-width="1.9" stroke-linejoin="round" stroke-linecap="round" /><circle cx="7" cy="7.4" r="1.2" fill="#406cff"/><circle cx="7" cy="12" r="1.2" fill="#406cff"/><circle cx="7" cy="16.9" r="1.2" fill="#406cff"/><path d="M10.8 21.7 L11.5 18.4 L18.7 11.2 L21.5 14 L14.3 21.2 Z" stroke="#406cff" stroke-width="1.25" stroke-linejoin="round" stroke-linecap="round" fill="#f2f2f2"/><path d="M16.9 13 L19.7 15.8" fill="none" stroke="#406cff" stroke-width="1.25" stroke-linejoin="round" stroke-linecap="round" /></g>
<rect x="854.5" y="166.1" width="54.3" height="56.2" rx="5" fill="#efefef" stroke="#f6121f" stroke-width="1.9"/><rect x="856.6" y="168.2" width="50.1" height="52" rx="3.5" fill="none" stroke="rgba(0,0,0,.10)" stroke-width="2"/><rect x="858.6" y="170.2" width="46.1" height="48" rx="2.5" fill="none" stroke="rgba(0,0,0,.045)" stroke-width="2"/>
<path d="M867.2 186.4 L877.3 182.4 L882.9 186.4 L888.6 182.4 L898.8 186.4 L894.4 189.8 L898.8 195.5 L887.5 200.2 L882.9 193.1 L878.4 200.2 L867.2 195.5 L871.5 189.8 Z" fill="none" stroke="#406cff" stroke-width="1.95" stroke-linejoin="round" stroke-linecap="round" /><path d="M871.5 189.8 L882.9 186.4 L894.4 189.8 M871.5 189.8 L882.9 193.1 L894.4 189.8" fill="none" stroke="#406cff" stroke-width="1.95" stroke-linejoin="round" stroke-linecap="round" /><path d="M872 198 V206.2 L882.9 211 L886.6 209 M893.7 198.4 V201.4" fill="none" stroke="#406cff" stroke-width="2.1" stroke-linejoin="round" stroke-linecap="butt" />
<path d="M888.3 205.2 H893.3 V203.4 L898.6 207.9 L893.3 212.4 V210.6 H888.3 Z" fill="none" stroke="#406cff" stroke-width="1.5" stroke-linejoin="miter" stroke-linecap="round" />
<path d="M928 206.3 H914.9 a2 2 0 0 1 -2 -2 V186.2 a2 2 0 0 1 2 -2 H922 L927.3 189.5 H937 a2 2 0 0 1 2 2 V195.4" fill="none" stroke="#406cff" stroke-width="3.2" stroke-linejoin="round" stroke-linecap="round" />
<rect x="929.6" y="197.4" width="12.8" height="13.1" rx="1" fill="none" stroke="#406cff" stroke-width="1.3" stroke-linejoin="round"/><path d="M930 210 L936.2 203 L942 208.4" fill="none" stroke="#406cff" stroke-width="1.3" stroke-linejoin="miter" stroke-linecap="round" /><circle cx="932.5" cy="201.2" r="1" fill="#406cff"/>
<path d="M975 211.3 H962.4 a1.2 1.2 0 0 1 -1.2 -1.2 V183.8 a1.2 1.2 0 0 1 1.2 -1.2 H978.9 a1.2 1.2 0 0 1 1.2 1.2 V199" fill="none" stroke="#406cff" stroke-width="3.2" stroke-linejoin="round" stroke-linecap="round" />
<path d="M965.4 188.9 H976" fill="none" stroke="#406cff" stroke-width="2.3" stroke-linejoin="round" stroke-linecap="round" />
<circle cx="965.5" cy="195.7" r="1.35" fill="#406cff"/>
<circle cx="965.5" cy="200.3" r="1.35" fill="#406cff"/>
<circle cx="965.5" cy="205" r="1.35" fill="#406cff"/>
<circle cx="970.4" cy="195.7" r="1.35" fill="#406cff"/>
<circle cx="970.4" cy="200.3" r="1.35" fill="#406cff"/>
<circle cx="970.4" cy="205" r="1.35" fill="#406cff"/>
<circle cx="975.3" cy="195.7" r="1.35" fill="#406cff"/>
<circle cx="975.3" cy="200.3" r="1.35" fill="#406cff"/>
<circle cx="979.6" cy="206.6" r="5.5" fill="#f2f2f2" stroke="#406cff" stroke-width="1.3"/>
<text x="979.6" y="208.7" font-size="5.8" text-anchor="middle" font-family="Liberation Sans, sans-serif" fill="#406cff">$</text>
<path d="M1017 207.4 H1000.2 a1 1 0 0 1 -1 -1 V187.1 a1 1 0 0 1 1 -1 H1025.5 V201" fill="none" stroke="#406cff" stroke-width="2.2" stroke-linejoin="round" stroke-linecap="round" />
<path d="M1026.5 188.8 H1028 a1 1 0 0 1 1 1 V201.5" fill="none" stroke="#406cff" stroke-width="1.8" stroke-linejoin="round" stroke-linecap="round" />
<rect x="1003" y="190.8" width="6" height="6.4" rx="0" fill="none" stroke="#406cff" stroke-width="1.6" stroke-linejoin="round"/>
<path d="M1012.9 190.3 H1022.9 M1012.9 192.8 H1022.9 M1012.9 195.2 H1022.9 M1012.9 197.6 H1022.9 M1002.5 201.6 H1017.5 M1002.5 204.2 H1016.5" fill="none" stroke="#406cff" stroke-width="1.5" stroke-linejoin="round" stroke-linecap="butt" />
<circle cx="1023.8" cy="206.9" r="5.5" fill="#f2f2f2" stroke="#406cff" stroke-width="1.3"/><path d="M1023.8 204.2 V209.6 M1021.1 206.9 H1026.5" fill="none" stroke="#406cff" stroke-width="1.4" stroke-linejoin="round" stroke-linecap="round" />
<path d="M1065.6 188.4 V184.2 a1.5 1.5 0 0 1 1.5 -1.5 H1078 a1.5 1.5 0 0 1 1.5 1.5 V188.4" fill="none" stroke="#406cff" stroke-width="3.2" stroke-linejoin="round" stroke-linecap="round" />
<path d="M1063 188.8 H1082.1 L1087.5 193.6 V206.6 a1.8 1.8 0 0 1 -1.8 1.8 H1059.4 a1.8 1.8 0 0 1 -1.8 -1.8 V193.6 Z M1057.6 199.2 H1087.5" fill="none" stroke="#406cff" stroke-width="3.1" stroke-linejoin="round" stroke-linecap="round" />
<path d="M1066.8 196.6 V202.4 M1078.2 196.6 V202.4" fill="none" stroke="#406cff" stroke-width="2.8" stroke-linejoin="round" stroke-linecap="round" />
<path d="M1108.1 180.6 H1110.6 a2.4 2.4 0 0 1 2.4 2.4 V203.8 a3.4 3.4 0 0 0 3.4 3.4 H1146" fill="none" stroke="#406cff" stroke-width="3.2" stroke-linejoin="round" stroke-linecap="round" />
<rect x="1120.5" y="182.5" width="23.6" height="17.9" rx="2" fill="none" stroke="#406cff" stroke-width="3.2" stroke-linejoin="round"/>
<path d="M1128 182.4 H1136.2 V191.8 L1132.1 189.4 L1128 191.8 Z" fill="#406cff" />
<path d="M1116.5 208.5 H1122.5 a3 3 0 0 1 -6 0 Z M1135.4 208.5 H1141.4 a3 3 0 0 1 -6 0 Z" fill="#406cff" />
<path d="M1181 183.2 H1203 a3.6 3.6 0 0 1 3.6 3.6 V208.3 a3.6 3.6 0 0 1 -3.6 3.6 H1181 a3.6 3.6 0 0 1 -3.6 -3.6 V186.8 a3.6 3.6 0 0 1 3.6 -3.6 Z M1180.7 191 V208.7 H1203.2 V191 Z" fill="#406cff" fill-rule="evenodd"/>
<rect x="1184.1" y="179" width="3.1" height="6" rx="1" fill="#406cff"/><rect x="1196.7" y="179" width="3.1" height="6" rx="1" fill="#406cff"/>
<path d="M1192 195.5 V204.7 M1187.4 200.1 H1196.6" fill="none" stroke="#406cff" stroke-width="2.7" stroke-linejoin="round" stroke-linecap="round" />
<path d="M1238.6 182.5 H1267.4 V202.2 L1258.2 211.3 H1238.6 Z" fill="none" stroke="#406cff" stroke-width="3.2" stroke-linejoin="miter" stroke-linecap="butt" />
<path d="M1267.4 200.4 H1256.3 V211.3" fill="none" stroke="#406cff" stroke-width="3" stroke-linejoin="miter" stroke-linecap="butt" />
<path d="M1457.6 201.6 C1458.6 196.4 1453.9 194.4 1453.9 188.8 a7 7 0 0 1 14 0 C1467.9 194.4 1463.2 196.4 1464.2 201.6" fill="none" stroke="#406cff" stroke-width="2.7" stroke-linejoin="round" stroke-linecap="butt" />
<path d="M1446.3 202.7 H1475.6 V208.4 H1446.3 Z" fill="none" stroke="#406cff" stroke-width="2.7" stroke-linejoin="miter" stroke-linecap="round" />
<rect x="1446.7" y="210.2" width="28.6" height="2.7" rx="0.5" fill="#406cff"/>
<path d="M1496.6 195.5 V184.4 a2 2 0 0 1 2 -2 H1511 L1519.5 191 V209.3 a2 2 0 0 1 -2 2 H1498.6 a2 2 0 0 1 -2 -2 V208.5" fill="none" stroke="#406cff" stroke-width="3" stroke-linejoin="round" stroke-linecap="round" />
<path d="M1508.5 183 V190.4 a3 3 0 0 0 3 3 H1519" fill="none" stroke="#406cff" stroke-width="3" stroke-linejoin="round" stroke-linecap="round" />
<path d="M1489.6 209.7 L1501.6 198 L1503.4 199.8 L1491.4 211.5 Z" fill="none" stroke="#406cff" stroke-width="1.1" stroke-linejoin="miter" stroke-linecap="round" fill="#f2f2f2"/>
<path d="M1495.3 195.1 Q1495.6499999999999 197.75 1498.3 198.1 Q1495.6499999999999 198.45 1495.3 201.1 Q1494.95 198.45 1492.3 198.1 Q1494.95 197.75 1495.3 195.1 Z" fill="#406cff" /><circle cx="1495.3" cy="198.1" r="0.55" fill="#f2f2f2"/><path d="M1505.4 193.6 Q1505.75 196.25 1508.4 196.6 Q1505.75 196.95 1505.4 199.6 Q1505.0500000000002 196.95 1502.4 196.6 Q1505.0500000000002 196.25 1505.4 193.6 Z" fill="#406cff" /><circle cx="1505.4" cy="196.6" r="0.55" fill="#f2f2f2"/><path d="M1504 204.5 Q1504.35 207.15 1507.0 207.5 Q1504.35 207.85 1504 210.5 Q1503.65 207.85 1501.0 207.5 Q1503.65 207.15 1504 204.5 Z" fill="#406cff" /><circle cx="1504" cy="207.5" r="0.55" fill="#f2f2f2"/>
<rect x="1685.6" y="191.8" width="22.8" height="19.4" rx="3.4" fill="none" stroke="#406cff" stroke-width="3.2" stroke-linejoin="round"/>
<path d="M1692.1 191.5 V187.3 a4.8 4.8 0 0 1 9.6 0 V191.5" fill="none" stroke="#406cff" stroke-width="3.2" stroke-linejoin="round" stroke-linecap="round" />
<path d="M1743.7 193.4 H1777.4" fill="none" stroke="#406cff" stroke-width="2.7" stroke-linejoin="round" stroke-linecap="round" />
<path d="M1751.8 192.3 L1757.3 181.2 M1769.3 192.3 L1763.8 181.2" fill="none" stroke="#406cff" stroke-width="2.7" stroke-linejoin="round" stroke-linecap="round" />
<path d="M1748.2 194.6 L1751.4 208.4 a2.4 2.4 0 0 0 2.3 1.9 H1767.8 a2.4 2.4 0 0 0 2.3 -1.9 L1773.3 194.6" fill="none" stroke="#406cff" stroke-width="2.9" stroke-linejoin="round" stroke-linecap="round" />
<path d="M1754.9 199.7 V204.2 M1760.5 199.7 V204.2 M1766 199.7 V204.2" fill="none" stroke="#406cff" stroke-width="2.5" stroke-linejoin="round" stroke-linecap="round" />
<circle cx="1198.1" cy="794" r="10.5" fill="none" stroke="#406cff" stroke-width="3"/>
<path d="M1206 802 L1211 807" fill="none" stroke="#406cff" stroke-width="3.3" stroke-linejoin="round" stroke-linecap="round" />
<path d="M1232.2 805.5 H1225.9 a1.5 1.5 0 0 1 -1.5 -1.5 V785 M1248.5 785 V804 a1.5 1.5 0 0 1 -1.5 1.5 H1240.8" fill="none" stroke="#406cff" stroke-width="2.5" stroke-linejoin="round" stroke-linecap="butt" />
<path d="M1224.7 782.1 H1248.2 a1.5 1.5 0 0 1 1.5 1.5 V787.8 H1223.2 V783.6 a1.5 1.5 0 0 1 1.5 -1.5 Z" fill="#406cff" />
<path d="M1231.9 797.6 L1236.5 791.6 L1241.1 797.6 Z" fill="#406cff" /><path d="M1236.5 796.5 V808.8" fill="none" stroke="#406cff" stroke-width="3" stroke-linejoin="round" stroke-linecap="butt" />
<path d="M1452 403.8 H1444.4 a2 2 0 0 1 -2 -2 V384.4 a2 2 0 0 1 2 -2 H1451.2 L1456.4 387.6 H1466.4 a2 2 0 0 1 2 2 V393" fill="none" stroke="#406cff" stroke-width="3.2" stroke-linejoin="round" stroke-linecap="round" />
<rect x="1459.4" y="395.4" width="13" height="13.1" rx="1" fill="none" stroke="#406cff" stroke-width="1.3" stroke-linejoin="round"/><path d="M1459.8 408 L1466 401 L1471.9 406.4" fill="none" stroke="#406cff" stroke-width="1.3" stroke-linejoin="miter" stroke-linecap="round" /><circle cx="1462.3" cy="399.2" r="1" fill="#406cff"/></svg>
<svg class="i" style="left:770px;top:190px;filter:drop-shadow(1px 2px 2px rgba(0,0,0,.35))" width="120" height="110" viewBox="770 190 120 110">
<path d="M790.7 290.2 L848.5 226.8 L840.1 225.4 L866 214.8 L855.9 241.1 L854.2 233.4 Z" fill="#ff0000"/></svg>
</body></html>
